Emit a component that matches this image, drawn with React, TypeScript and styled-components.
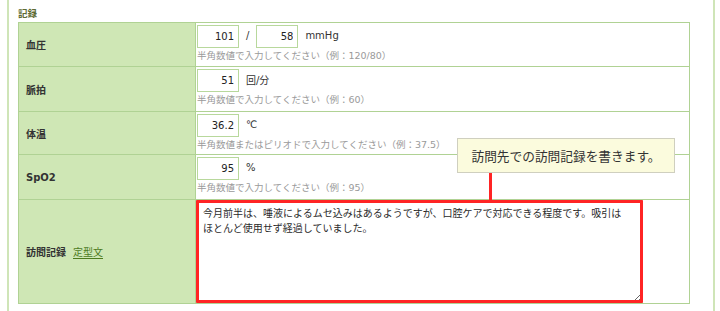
import React from "react";
import styled, { createGlobalStyle } from "styled-components";

const GlobalStyle = createGlobalStyle`
  body {
    margin: 0;
    background: #fff;
    font-family: "DejaVu Sans", "Noto Sans CJK JP", sans-serif;
    color: #333;
  }
`;

const Panel = styled.section`
  position: relative;
  box-sizing: border-box;
  margin-left: 7px;
  width: 708px;
  height: 311px;
  overflow: hidden;
  padding: 0 23px 0 9px;
  border-left: 2px solid #cfe5b8;
  border-right: 2px solid #cfe5b8;
`;

const Heading = styled.h2`
  margin: 6px 0 0;
  height: 16px;
  font-size: 9.5px;
  line-height: 16px;
  font-weight: bold;
  color: #5e6b34;
`;

const Table = styled.table`
  width: 672px;
  border-collapse: collapse;
  font-size: 10px;
`;

const Row = styled.tr<{ $h: number }>`
  height: ${({ $h }) => $h}px;
`;

const Label = styled.th`
  box-sizing: border-box;
  width: 177px;
  padding: 0 0 0 7px;
  text-align: left;
  vertical-align: middle;
  font-weight: bold;
  font-size: 10px;
  color: #333;
  background: #cfe7b5;
  border: 1px solid #b0d294;
`;

const Value = styled.td<{ $pad?: string }>`
  padding: ${({ $pad }) => $pad || "2px 1px 0"};
  vertical-align: top;
  background: #fff;
  border: 1px solid #b0d294;
`;

const InputLine = styled.div`
  display: flex;
  align-items: center;
  height: 23px;
`;

const NumInput = styled.input`
  box-sizing: border-box;
  width: 42px;
  height: 23px;
  margin: 0;
  padding: 0 4px;
  border: 1px solid #b8d89c;
  border-radius: 0;
  font-family: inherit;
  font-size: 10px;
  color: #222;
  text-align: right;
  outline: none;
`;

const Unit = styled.span<{ $gap?: number }>`
  margin: 0 ${({ $gap }) => $gap ?? 0}px 0 7px;
  font-size: 10px;
  color: #333;
  position: relative;
  top: -1px;
`;

const Hint = styled.div`
  margin-top: 1px;
  font-size: 9.5px;
  line-height: 14px;
  color: #9a9a9a;
`;

const TemplateLink = styled.a`
  margin-left: 7px;
  font-weight: normal;
  color: #4d7a1e;
  text-decoration: none;
  border-bottom: 1px solid #4d7a1e;
`;

const NoteBox = styled.div`
  position: relative;
  width: 447px;
  height: 103px;

  &::after {
    content: "";
    position: absolute;
    inset: 0;
    border: 3px solid #ff2424;
    border-radius: 1px;
    pointer-events: none;
  }
`;

const NoteArea = styled.textarea`
  box-sizing: border-box;
  display: block;
  width: 100%;
  height: 100%;
  margin: 0;
  padding: 5px 6px;
  border: 1px solid #ccc;
  font-family: inherit;
  font-size: 10px;
  line-height: 15px;
  color: #2a2a2a;
  resize: vertical;
  outline: none;
`;

const Callout = styled.div`
  position: absolute;
  left: 448px;
  top: 138px;
  box-sizing: border-box;
  width: 218px;
  height: 35px;
  display: flex;
  align-items: center;
  justify-content: center;
  background: #fbfbdd;
  border: 1px solid #cfcfbf;
  font-size: 12.7px;
  color: #333;
`;

const Connector = styled.div`
  position: absolute;
  left: 480px;
  top: 172px;
  width: 3px;
  height: 28px;
  background: #ff2424;
`;

const note =
  "今月前半は、唾液によるムセ込みはあるようですが、口腔ケアで対応できる程度です。吸引は\nほとんど使用せず経過していました。";

export default function App() {
  return (
    <>
      <GlobalStyle />
      <Panel>
        <Heading>記録</Heading>
        <Table>
          <tbody>
            <Row $h={44}>
              <Label>血圧</Label>
              <Value>
                <InputLine>
                  <NumInput defaultValue="101" />
                  <Unit $gap={7}>/</Unit>
                  <NumInput defaultValue="58" />
                  <Unit>mmHg</Unit>
                </InputLine>
                <Hint>半角数値で入力してください（例：120/80）</Hint>
              </Value>
            </Row>
            <Row $h={45}>
              <Label>脈拍</Label>
              <Value>
                <InputLine>
                  <NumInput defaultValue="51" />
                  <Unit>回/分</Unit>
                </InputLine>
                <Hint>半角数値で入力してください（例：60）</Hint>
              </Value>
            </Row>
            <Row $h={43}>
              <Label>体温</Label>
              <Value>
                <InputLine>
                  <NumInput defaultValue="36.2" />
                  <Unit>℃</Unit>
                </InputLine>
                <Hint>半角数値またはピリオドで入力してください（例：37.5）</Hint>
              </Value>
            </Row>
            <Row $h={45}>
              <Label>SpO2</Label>
              <Value>
                <InputLine>
                  <NumInput defaultValue="95" />
                  <Unit>%</Unit>
                </InputLine>
                <Hint>半角数値で入力してください（例：95）</Hint>
              </Value>
            </Row>
            <Row $h={102}>
              <Label>
                訪問記録
                <TemplateLink href="#">定型文</TemplateLink>
              </Label>
              <Value $pad="0 0 0 0">
                <NoteBox>
                  <NoteArea defaultValue={note} />
                </NoteBox>
              </Value>
            </Row>
          </tbody>
        </Table>
        <Connector />
        <Callout>訪問先での訪問記録を書きます。</Callout>
      </Panel>
    </>
  );
}
